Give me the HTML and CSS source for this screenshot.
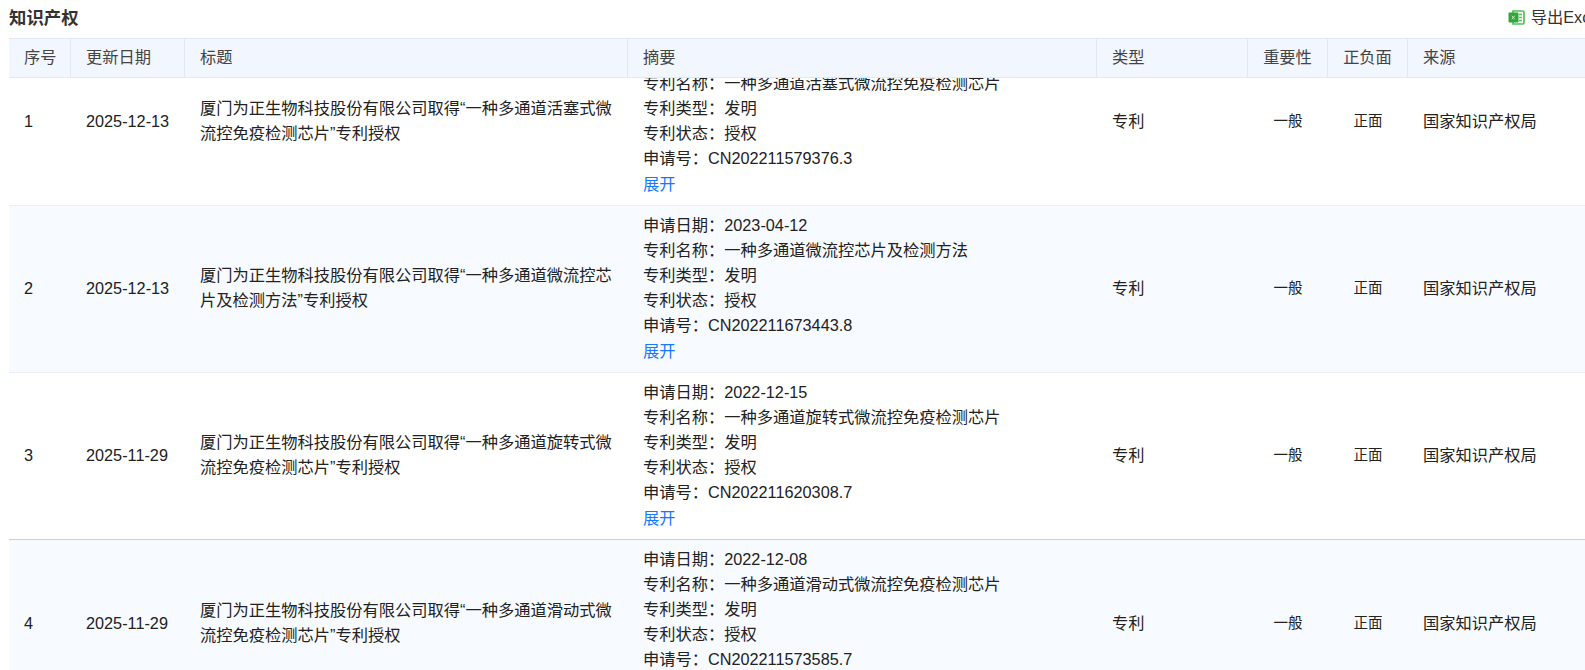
FILE: index.html
```html
<!DOCTYPE html>
<html lang="zh-CN">
<head>
<meta charset="utf-8">
<title>知识产权</title>
<link rel="stylesheet" href="styles.css">
</head>
<body>
<main class="panel">
  <div class="topbar">
    <h2 class="title">知识产权</h2>
    <a class="export">
      <svg class="xls" viewBox="0 0 17 15" width="17" height="15" aria-hidden="true">
        <path d="M5 1h9.500A1.500 1.500 0 0 1 16 2.500v10a1.500 1.500 0 0 1-1.500 1.500H5z" fill="#fff" stroke="#4fc354" stroke-width="1.700"/>
        <path d="M11 4.500h3M11 7.500h3M11 10.500h3" stroke="#4fc354" stroke-width="1.300"/>
        <rect x="0.500" y="2.500" width="10" height="10" rx="1" fill="#2fa836"/>
        <path d="M3.800 5.700l3 3.600M6.800 5.700l-3 3.600" stroke="#cfeed1" stroke-width="0.900"/>
      </svg>
      <span>导出Excel</span>
    </a>
  </div>
  <table class="grid head">
    <colgroup><col class="c1"><col class="c2"><col class="c3"><col class="c4"><col class="c5"><col class="c6"><col class="c7"><col class="c8"></colgroup>
    <thead>
      <tr><th>序号</th><th>更新日期</th><th>标题</th><th>摘要</th><th>类型</th><th class="mid">重要性</th><th class="mid">正负面</th><th>来源</th></tr>
    </thead>
  </table>
  <div class="viewport">
    <table class="grid rows">
      <colgroup><col class="c1"><col class="c2"><col class="c3"><col class="c4"><col class="c5"><col class="c6"><col class="c7"><col class="c8"></colgroup>
      <tbody>
        <tr>
          <td>1</td><td>2025-12-13</td>
          <td>厦门为正生物科技股份有限公司取得“一种多通道活塞式微流控免疫检测芯片”专利授权</td>
          <td class="abstract">申请日期：2022-12-12<br>专利名称：一种多通道活塞式微流控免疫检测芯片<br>专利类型：发明<br>专利状态：授权<br>申请号：CN202211579376.3<a class="more">展开</a></td>
          <td>专利</td><td class="mid">一般</td><td class="mid">正面</td><td>国家知识产权局</td>
        </tr>
        <tr>
          <td>2</td><td>2025-12-13</td>
          <td>厦门为正生物科技股份有限公司取得“一种多通道微流控芯片及检测方法”专利授权</td>
          <td class="abstract">申请日期：2023-04-12<br>专利名称：一种多通道微流控芯片及检测方法<br>专利类型：发明<br>专利状态：授权<br>申请号：CN202211673443.8<a class="more">展开</a></td>
          <td>专利</td><td class="mid">一般</td><td class="mid">正面</td><td>国家知识产权局</td>
        </tr>
        <tr class="hot">
          <td>3</td><td>2025-11-29</td>
          <td>厦门为正生物科技股份有限公司取得“一种多通道旋转式微流控免疫检测芯片”专利授权</td>
          <td class="abstract">申请日期：2022-12-15<br>专利名称：一种多通道旋转式微流控免疫检测芯片<br>专利类型：发明<br>专利状态：授权<br>申请号：CN202211620308.7<a class="more">展开</a></td>
          <td>专利</td><td class="mid">一般</td><td class="mid">正面</td><td>国家知识产权局</td>
        </tr>
        <tr class="tall">
          <td>4</td><td>2025-11-29</td>
          <td>厦门为正生物科技股份有限公司取得“一种多通道滑动式微流控免疫检测芯片”专利授权</td>
          <td class="abstract">申请日期：2022-12-08<br>专利名称：一种多通道滑动式微流控免疫检测芯片<br>专利类型：发明<br>专利状态：授权<br>申请号：CN202211573585.7<a class="more">展开</a></td>
          <td>专利</td><td class="mid">一般</td><td class="mid">正面</td><td>国家知识产权局</td>
        </tr>
      </tbody>
    </table>
  </div>
</main>
</body>
</html>
```
FILE: styles.css
```css
html, body {
  margin: 0;
  height: 670px;
  overflow: hidden;
  background: #fff;
}
body {
  font-family: "Liberation Sans", "Noto Sans CJK SC", sans-serif;
  font-size: 16.25px;
  line-height: 25px;
  color: #222;
}
.panel {
  width: 1594px;
  height: 670px;
  margin-left: 9px;
  display: flex;
  flex-direction: column;
  overflow: hidden;
}
.topbar {
  height: 38px;
  flex: none;
  display: flex;
  align-items: flex-start;
  justify-content: space-between;
}
.title {
  margin: 6px 0 0;
  font-size: 17.4px;
  line-height: 24px;
  font-weight: 700;
  color: #333;
}
.export {
  display: flex;
  align-items: center;
  gap: 6px;
  margin-top: 5px;
  color: #333;
  line-height: 24px;
}
.xls { display: block; }
.grid {
  width: 1594px;
  table-layout: fixed;
  border-collapse: separate;
  border-spacing: 0;
}
.c1 { width: 62px; }
.c2 { width: 114px; }
.c3 { width: 443px; }
.c4 { width: 469px; }
.c5 { width: 151px; }
.c6 { width: 80px; }
.c7 { width: 80px; }
.c8 { width: 195px; }
.head { flex: none; }
.head th {
  height: 37px;
  padding: 0 0 1px 15px;
  background: #f2f6fe;
  border-top: 1px solid #e1e8f6;
  border-bottom: 1px solid #e1e8f6;
  border-right: 1px solid #e1e8f6;
  font-weight: 400;
  color: #444;
  text-align: left;
  white-space: nowrap;
}
.head th.mid { text-align: center; padding: 0 0 1px; }
.viewport {
  flex: 1;
  min-height: 0;
  overflow: hidden;
}
.rows { margin-top: -39px; }
.rows td {
  padding: 7px 15px 9px 15px;
  border-bottom: 1px solid #e9eff8;
  vertical-align: middle;
  text-align: left;
}
.rows td.abstract { vertical-align: top; }
.rows td.mid { text-align: center; padding-left: 0; padding-right: 0; font-size: 14.5px; }
.rows tr:nth-child(even) td { background: #f7faff; }
.rows tr.hot td { border-bottom-color: #b9d3fb; }
.rows tr.tall td { height: 152px; }
.more { display: block; padding-top: 1px; margin-bottom: -1px; color: #1677ff; }
```
